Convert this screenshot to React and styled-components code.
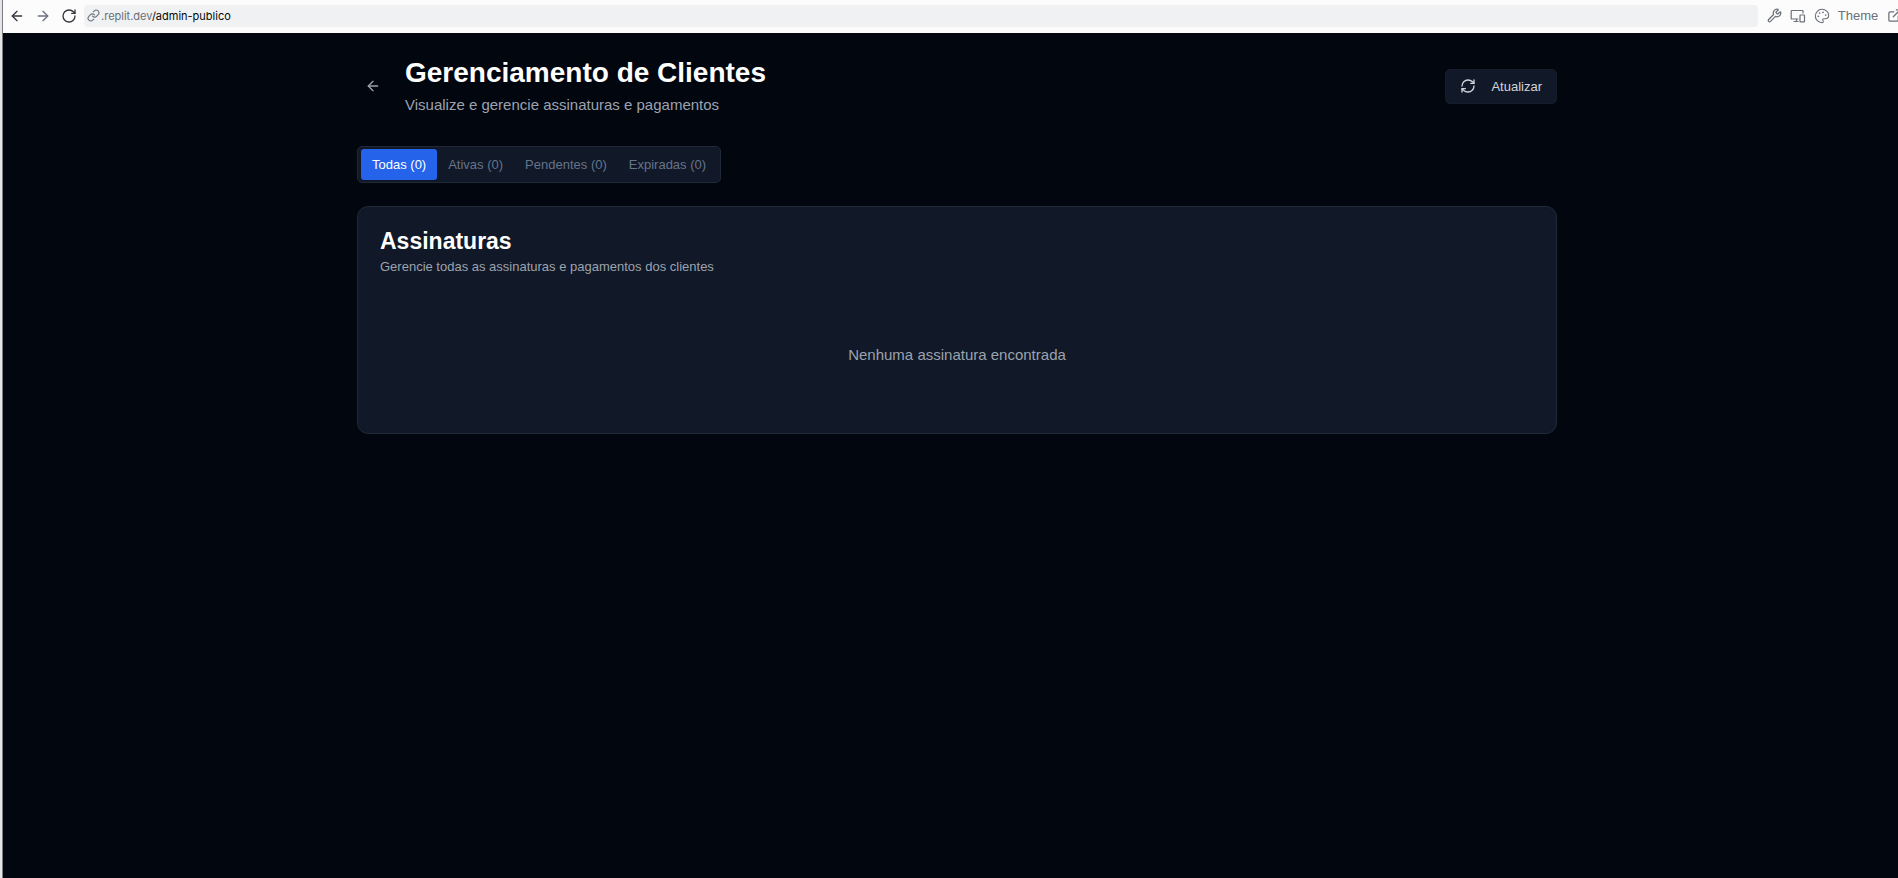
import React, { useState } from "react";
import styled, { createGlobalStyle } from "styled-components";
import { ArrowLeft, ArrowRight, ExternalLink, Link, Palette, RefreshCw, RotateCw, Wrench } from "lucide-react";

const GlobalStyle = createGlobalStyle`
  * { box-sizing: border-box; }
  body {
    margin: 0;
    background: #02060f;
    font-family: "Liberation Sans", Arial, sans-serif;
  }
  h1, h2, p { margin: 0; }
  button { font: inherit; cursor: pointer; }
`;

const Shell = styled.div`
  min-height: 100vh;
  display: flex;
  flex-direction: column;
  overflow: hidden;
  border-left: 2px solid #e4e5e7;
`;

const Pane = styled.div`
  flex: 1;
  display: flex;
  flex-direction: column;
  margin-right: -13px;
  border-left: 1px solid #7b7d82;
`;

const BrowserBar = styled.header`
  display: flex;
  align-items: center;
  height: 33px;
  padding: 0 5px 2px 1px;
  background: #fcfcfc;
`;

const BarButton = styled.button`
  display: flex;
  align-items: center;
  justify-content: center;
  gap: 8px;
  height: 24px;
  width: ${(p) => p.$width}px;
  padding: 0;
  border: 0;
  background: none;
  color: ${(p) => p.$color || "#6a6f79"};
  font-size: 13px;
`;

const AddressBar = styled.div`
  flex: 1;
  display: flex;
  align-items: center;
  gap: 1px;
  height: 22px;
  margin: 0 4px 0 2px;
  padding: 0 3px;
  border-radius: 4px;
  background: #f0f1f2;
  font-family: Inter, "Noto Sans", sans-serif;
  font-size: 11px;
  color: #6a6f79;
`;

const Path = styled.span`
  color: #07080a;
`;

const Page = styled.main`
  flex: 1;
  padding: 22px 24px;
  background: #02060f;
`;

const Container = styled.div`
  max-width: 1200px;
  margin: 0 auto;
`;

const PageHeader = styled.div`
  display: flex;
  align-items: center;
  gap: 16px;
  margin-bottom: 29px;
`;

const BackButton = styled.button`
  display: flex;
  align-items: center;
  justify-content: center;
  width: 32px;
  height: 36px;
  padding: 0;
  border: 0;
  background: none;
  color: #9ca3af;
`;

const Heading = styled.div`
  flex: 1;
  display: flex;
  flex-direction: column;
  gap: 2px;
`;

const Title = styled.h1`
  font-size: 28px;
  line-height: 36px;
  color: #ffffff;
`;

const Muted = styled.p`
  font-size: ${(p) => (p.$small ? 13 : 15)}px;
  line-height: ${(p) => (p.$small ? 20 : 24)}px;
  color: #9ca3af;
`;

const RefreshButton = styled.button`
  display: flex;
  align-items: center;
  gap: 15px;
  height: 35px;
  padding: 0 14px;
  border: 1px solid #151d2a;
  border-radius: 5px;
  background: #111827;
  color: #d1d5db;
  font-size: 13px;
`;

const Tabs = styled.div`
  display: flex;
  width: fit-content;
  height: 37px;
  padding: 2px 3px;
  border: 1px solid #1f2937;
  border-radius: 5px;
  background: #111827;
`;

const Tab = styled.button`
  padding: 0 11px;
  border: 0;
  border-radius: 3px;
  background: ${(p) => (p.$active ? "#2563eb" : "transparent")};
  color: ${(p) => (p.$active ? "#ffffff" : "#64748b")};
  font-size: 13px;
`;

const Card = styled.section`
  margin-top: 23px;
  padding: 22px;
  border: 1px solid #1f2937;
  border-radius: 11px;
  background: #111827;
`;

const CardTitle = styled.h2`
  margin-bottom: 4px;
  font-size: 23px;
  line-height: 24px;
  color: #ffffff;
`;

const EmptyState = styled.div`
  padding: 66px 0 44px;
  text-align: center;
`;

const DevicesIcon = () => (
  <svg width="16" height="16" viewBox="0 0 16 16" fill="none" stroke="currentColor" strokeWidth="1.2" strokeLinejoin="round" strokeLinecap="round" aria-hidden="true">
    <path d="M13 5V3.1a.6.6 0 0 0-.6-.6H1.8a.6.6 0 0 0-.6.6v7.3a.6.6 0 0 0 .6.6H8M4 13.5h4M6.5 11v2.5" />
    <rect x="10" y="7" width="4.5" height="6.8" rx=".6" />
  </svg>
);

const tabs = ["Todas (0)", "Ativas (0)", "Pendentes (0)", "Expiradas (0)"];

export default function App() {
  const [active, setActive] = useState(tabs[0]);
  return (
    <Shell>
      <GlobalStyle />
      <Pane>
        <BrowserBar>
          <BarButton $width={26} $color="#33363d" aria-label="Voltar"><ArrowLeft size={16} strokeWidth={2} /></BarButton>
          <BarButton $width={26} aria-label="Avançar"><ArrowRight size={16} strokeWidth={2} /></BarButton>
          <BarButton $width={26} $color="#33363d" aria-label="Recarregar"><RotateCw size={16} strokeWidth={2} /></BarButton>
          <AddressBar>
            <Link size={13} />
            <span>.replit.dev<Path>/admin-publico</Path></span>
          </AddressBar>
          <BarButton $width={24} aria-label="Ferramentas"><Wrench size={15} /></BarButton>
          <BarButton $width={24} aria-label="Dispositivos"><DevicesIcon /></BarButton>
          <BarButton $width={72}><Palette size={16} strokeWidth={1.6} />Theme</BarButton>
          <BarButton $width={24} aria-label="Abrir em nova aba"><ExternalLink size={15} /></BarButton>
        </BrowserBar>
        <Page>
          <Container>
            <PageHeader>
              <BackButton aria-label="Voltar"><ArrowLeft size={16} /></BackButton>
              <Heading>
                <Title>Gerenciamento de Clientes</Title>
                <Muted>Visualize e gerencie assinaturas e pagamentos</Muted>
              </Heading>
              <RefreshButton><RefreshCw size={16} />Atualizar</RefreshButton>
            </PageHeader>
            <Tabs role="tablist">
              {tabs.map((t) => (
                <Tab key={t} role="tab" aria-selected={t === active} $active={t === active} onClick={() => setActive(t)}>{t}</Tab>
              ))}
            </Tabs>
            <Card>
              <CardTitle>Assinaturas</CardTitle>
              <Muted $small>Gerencie todas as assinaturas e pagamentos dos clientes</Muted>
              <EmptyState>
                <Muted>Nenhuma assinatura encontrada</Muted>
              </EmptyState>
            </Card>
          </Container>
        </Page>
      </Pane>
    </Shell>
  );
}
